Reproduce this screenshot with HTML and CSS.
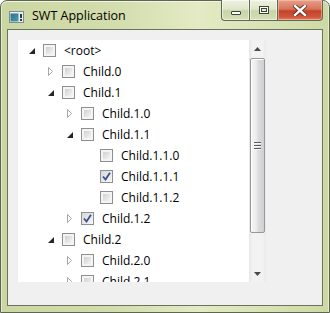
FILE: index.html
```html
<!DOCTYPE html>
<html>
<head>
<meta charset="utf-8">
<link rel="stylesheet" href="styles.css">
</head>
<body>
<div class="window">
  <div class="titlebar">
    <svg class="appicon" width="15" height="12" viewBox="0 0 15 12">
      <defs>
        <linearGradient id="ig" x1="0" y1="0" x2="1" y2="1">
          <stop offset="0" stop-color="#2a6f8f"/>
          <stop offset="1" stop-color="#4aa0a8"/>
        </linearGradient>
      </defs>
      <rect x="0.5" y="0.5" width="14" height="11" fill="#e8ecef" stroke="#7f8a92"/>
      <rect x="1.5" y="2.5" width="8" height="8" fill="url(#ig)"/>
      <rect x="11" y="3" width="2" height="4" fill="#2d3d48"/>
      <rect x="11" y="8" width="2" height="2" fill="#2d3d48"/>
    </svg>
    <span class="title">SWT Application</span>
    <div class="caption">
      <div class="cbtn min"><span class="minglyph"></span></div>
      <div class="cbtn max"><span class="maxglyph"></span></div>
      <div class="cbtn close">
        <svg width="14" height="11" viewBox="0 0 14 11">
          <path d="M2 1 L12 10 M12 1 L2 10" stroke="#5b2a20" stroke-width="4.2" stroke-linecap="square"/>
          <path d="M2 1 L12 10 M12 1 L2 10" stroke="#ffffff" stroke-width="2.4" stroke-linecap="square"/>
        </svg>
      </div>
    </div>
  </div>
  <div class="client">
    <div class="tree">
      <div class="rows">
        <div class="row l0"><span class="exp"><svg width="6" height="6" viewBox="0 0 6 6"><path d="M6 0 L6 6 L0 6 Z" fill="#262626"/></svg></span><span class="cb"></span><span class="label">&lt;root&gt;</span></div>
        <div class="row l1"><span class="exp"><svg width="6" height="9" viewBox="0 0 6 9"><path d="M0.5 0.5 L4.5 4.5 L0.5 8.5 Z" fill="#fff" stroke="#a6a6a6"/></svg></span><span class="cb"></span><span class="label">Child.0</span></div>
        <div class="row l1"><span class="exp"><svg width="6" height="6" viewBox="0 0 6 6"><path d="M6 0 L6 6 L0 6 Z" fill="#262626"/></svg></span><span class="cb"></span><span class="label">Child.1</span></div>
        <div class="row l2"><span class="exp"><svg width="6" height="9" viewBox="0 0 6 9"><path d="M0.5 0.5 L4.5 4.5 L0.5 8.5 Z" fill="#fff" stroke="#a6a6a6"/></svg></span><span class="cb"></span><span class="label">Child.1.0</span></div>
        <div class="row l2"><span class="exp"><svg width="6" height="6" viewBox="0 0 6 6"><path d="M6 0 L6 6 L0 6 Z" fill="#262626"/></svg></span><span class="cb"></span><span class="label">Child.1.1</span></div>
        <div class="row l3"><span class="exp"></span><span class="cb"></span><span class="label">Child.1.1.0</span></div>
        <div class="row l3"><span class="exp"></span><span class="cb checked"><svg width="9" height="9" viewBox="0 0 9 9"><path d="M1 4.5 L3.5 7.5 L8 0.8" fill="none" stroke="#3b4f8c" stroke-width="1.8"/></svg></span><span class="label">Child.1.1.1</span></div>
        <div class="row l3"><span class="exp"></span><span class="cb"></span><span class="label">Child.1.1.2</span></div>
        <div class="row l2"><span class="exp"><svg width="6" height="9" viewBox="0 0 6 9"><path d="M0.5 0.5 L4.5 4.5 L0.5 8.5 Z" fill="#fff" stroke="#a6a6a6"/></svg></span><span class="cb checked"><svg width="9" height="9" viewBox="0 0 9 9"><path d="M1 4.5 L3.5 7.5 L8 0.8" fill="none" stroke="#3b4f8c" stroke-width="1.8"/></svg></span><span class="label">Child.1.2</span></div>
        <div class="row l1"><span class="exp"><svg width="6" height="6" viewBox="0 0 6 6"><path d="M6 0 L6 6 L0 6 Z" fill="#262626"/></svg></span><span class="cb"></span><span class="label">Child.2</span></div>
        <div class="row l2"><span class="exp"><svg width="6" height="9" viewBox="0 0 6 9"><path d="M0.5 0.5 L4.5 4.5 L0.5 8.5 Z" fill="#fff" stroke="#a6a6a6"/></svg></span><span class="cb"></span><span class="label">Child.2.0</span></div>
        <div class="row l2"><span class="exp"><svg width="6" height="9" viewBox="0 0 6 9"><path d="M0.5 0.5 L4.5 4.5 L0.5 8.5 Z" fill="#fff" stroke="#a6a6a6"/></svg></span><span class="cb"></span><span class="label">Child.2.1</span></div>
      </div>
      <div class="vscroll">
        <div class="sbtn"><svg width="7" height="4" viewBox="0 0 7 4"><path d="M3.5 0 L7 4 L0 4 Z" fill="#4a4a4a"/></svg></div>
        <div class="track">
          <div class="thumb">
            <span class="grip"></span><span class="grip"></span><span class="grip"></span>
          </div>
        </div>
        <div class="sbtn"><svg width="7" height="4" viewBox="0 0 7 4"><path d="M0 0 L7 0 L3.5 4 Z" fill="#4a4a4a"/></svg></div>
      </div>
    </div>
  </div>
</div>
</body>
</html>
```
FILE: styles.css
```css
html, body {
  margin: 0;
  padding: 0;
  background: #ffffff;
}
body {
  width: 330px;
  height: 313px;
  overflow: hidden;
  font-family: "Open Sans", "Noto Sans", sans-serif;
}
.window {
  box-sizing: border-box;
  width: 330px;
  height: 313px;
  border: 1px solid #5d6652;
  border-radius: 7px 7px 0 0;
  background: linear-gradient(90deg, #cbd7a2 0%, #d3ddad 35%, #e4eac4 60%, #dce5b8 75%, #cdd9a4 100%);
  box-shadow: inset 0 1px 0 #f2f5e2, inset 1px 0 0 #e6ebcf, inset -1px 0 0 #e6ebcf;
  padding: 0 6px 6px 6px;
  display: flex;
  flex-direction: column;
}
.titlebar {
  height: 28px;
  flex: none;
  display: flex;
  align-items: flex-start;
  position: relative;
}
.appicon {
  margin-top: 10px;
  margin-left: 2px;
}
.title {
  margin-left: 8px;
  margin-top: 6px;
  font-size: 12.5px;
  line-height: 17px;
  color: #000;
}
.caption {
  position: absolute;
  right: 0;
  top: -1px;
  display: flex;
  height: 21px;
}
.cbtn {
  box-sizing: border-box;
  height: 21px;
  display: flex;
  align-items: center;
  justify-content: center;
  border: 1px solid #5f6a56;
  border-top: none;
}
.min {
  width: 28px;
  border-right: none;
  border-radius: 0 0 0 4px;
  background: linear-gradient(#eef2e2 0%, #dfe6c9 45%, #c9d4a8 55%, #d6dfb7 100%);
  box-shadow: inset 0 0 0 1px rgba(255,255,255,0.5);
}
.max {
  width: 28px;
  border-right: none;
  background: linear-gradient(#eef2e2 0%, #dfe6c9 45%, #c9d4a8 55%, #d6dfb7 100%);
  box-shadow: inset 0 0 0 1px rgba(255,255,255,0.5);
}
.close {
  width: 46px;
  border-radius: 0 0 4px 0;
  background: linear-gradient(#e6a08c 0%, #d8755c 45%, #c4432a 55%, #d0563a 85%, #e08368 100%);
  box-shadow: inset 0 0 0 1px rgba(255,210,190,0.5);
}
.minglyph {
  width: 8px;
  height: 2px;
  margin-top: 5px;
  background: #fff;
  border: 1px solid #3d4536;
  border-radius: 1px;
}
.maxglyph {
  box-sizing: border-box;
  width: 10px;
  height: 8px;
  border: 1px solid #3d4536;
  box-shadow: inset 0 0 0 1px #fff, inset 0 0 0 2px #3d4536;
  background: #e9eedb;
  margin-top: -1px;
}
.client {
  flex: 1;
  border: 1px solid #6a735f;
  background: #f0f0f0;
  padding: 10px 0 0 10px;
}
.tree {
  width: 248px;
  height: 242px;
  background: #fff;
  display: flex;
  overflow: hidden;
}
.rows {
  flex: 1;
  overflow: hidden;
  font-size: 12px;
  color: #000;
}
.row {
  height: 21px;
  display: flex;
  align-items: center;
  white-space: nowrap;
}
.l0 { padding-left: 6px; }
.l1 { padding-left: 25px; }
.l2 { padding-left: 44px; }
.l3 { padding-left: 63px; }
.exp {
  width: 16px;
  height: 21px;
  margin-right: 3px;
  display: flex;
  align-items: center;
  justify-content: center;
  flex: none;
}
.cb {
  box-sizing: border-box;
  width: 13px;
  height: 13px;
  flex: none;
  border: 1px solid #8f8f8f;
  padding: 2px;
  background: linear-gradient(135deg, #cfd0d2, #f5f5f6) content-box, #f4f4f4;
  margin-right: 8px;
  display: flex;
  align-items: center;
  justify-content: center;
  position: relative;
}
.cb.checked {
  padding: 0;
  background: linear-gradient(135deg, #d6d7d9, #f7f7f7);
}
.cb.checked svg {
  display: block;
}
.label {
  line-height: 17px;
  margin-top: -1px;
}
.vscroll {
  width: 17px;
  flex: none;
  display: flex;
  flex-direction: column;
  background: linear-gradient(90deg, #e6e6e6 0%, #f2f2f2 20%, #f2f2f2 80%, #e9e9e9 100%);
}
.sbtn {
  height: 17px;
  flex: none;
  display: flex;
  align-items: center;
  justify-content: center;
}
.track {
  flex: 1;
  padding-top: 1px;
}
.thumb {
  box-sizing: border-box;
  width: 15px;
  height: 175px;
  margin-left: 1px;
  border: 1px solid #979797;
  border-radius: 2px;
  background: linear-gradient(90deg, #f6f6f6 0%, #ececec 40%, #dcdcde 55%, #cfd0d3 100%);
  box-shadow: inset 1px 1px 0 #ffffff;
  display: flex;
  flex-direction: column;
  align-items: center;
  justify-content: center;
  gap: 1px;
}
.grip {
  width: 7px;
  height: 1px;
  background: #5a5a5a;
  box-shadow: 0 1px 0 #f6f6f6;
  margin-bottom: 1px;
}
```
